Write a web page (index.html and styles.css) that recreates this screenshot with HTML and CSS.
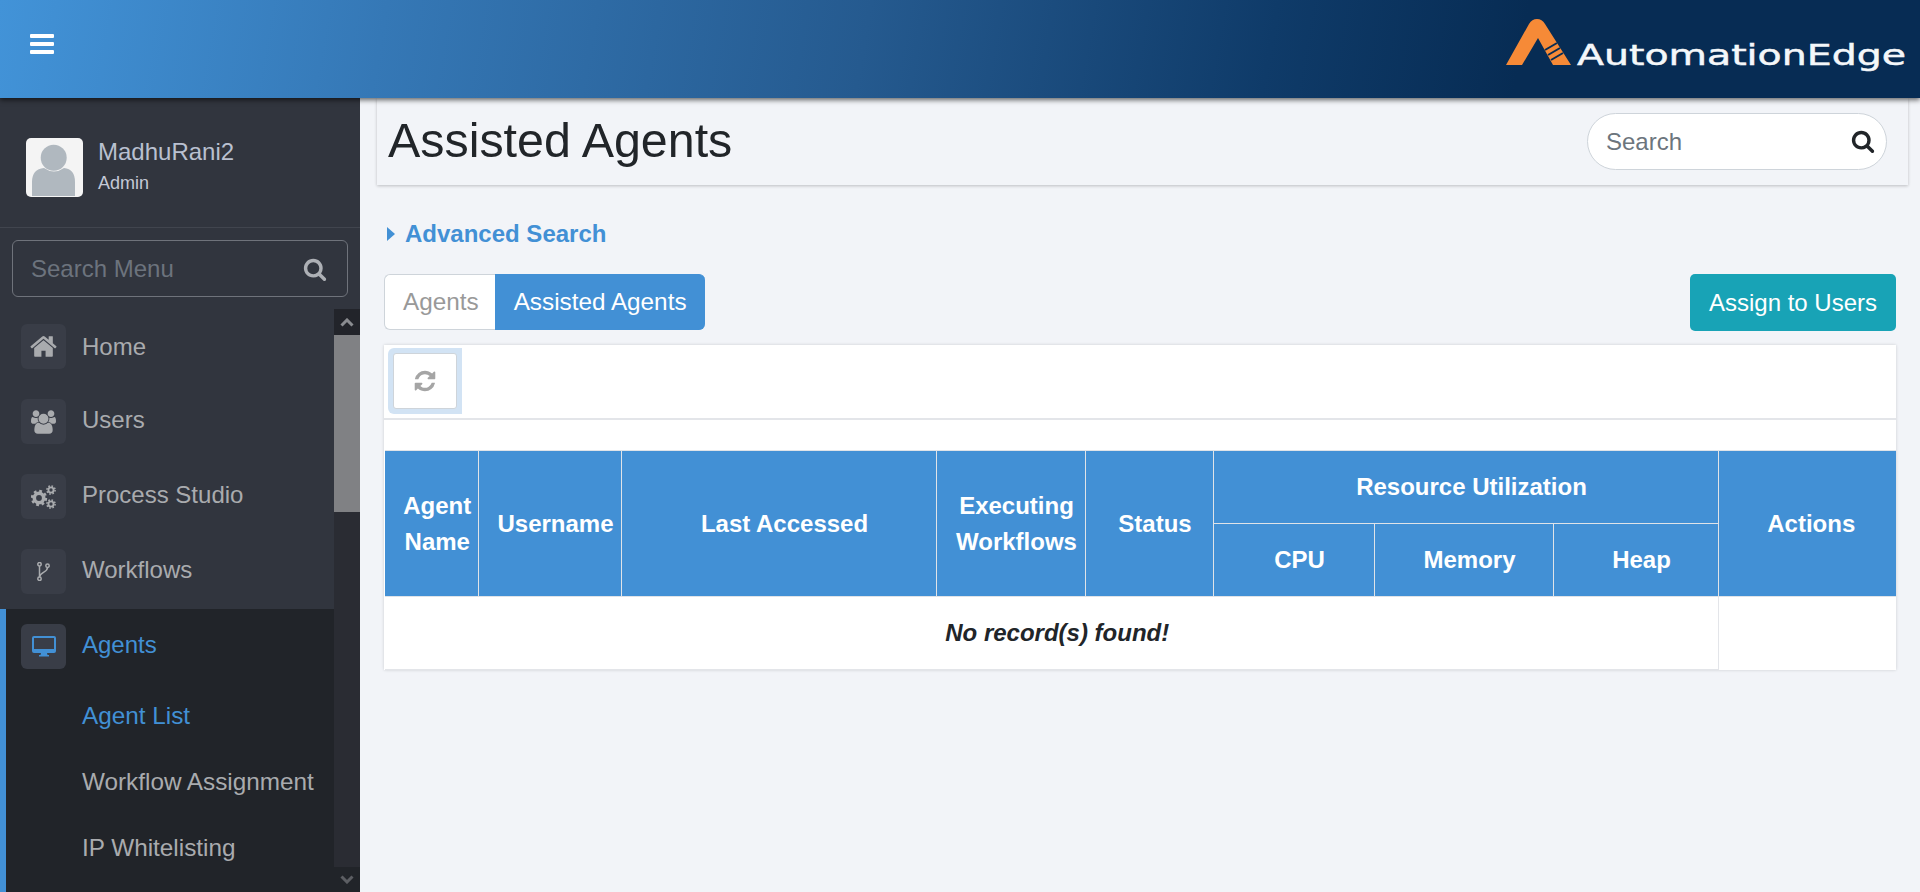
FILE: index.html
```html
<!DOCTYPE html>
<html lang="en">
<head>
<meta charset="utf-8">
<title>Assisted Agents</title>
<link rel="stylesheet" href="styles.css">
</head>
<body>
<header class="topbar">
  <button class="burger" type="button" aria-label="Menu">
    <span></span><span></span><span></span>
  </button>
  <div class="logo">
    <svg class="logo-mark" viewBox="0 0 66 46" width="66" height="46">
      <path class="mark-fill" d="M0 46 L23 5 Q26 0 31 0 Q36 0 39 5 L65 46 L47 46 L32 19 L16 46 Z"/>
      <path class="mark-cut" d="M39 31 L51 24 M42 36 L54 29 M45 41 L57 34"/>
    </svg>
    <div class="logo-word"><span class="logo-text">AutomationEdge</span></div>
  </div>
</header>
<div class="shell">
  <aside class="sidebar">
    <div class="profile">
      <div class="avatar">
        <svg viewBox="0 0 57 59" width="57" height="59">
          <circle class="avatar-fill" cx="27.700" cy="19.700" r="13"/>
          <path class="avatar-fill" d="M6 58 V44 Q6 31 18 30 Q28 37 38 30 Q49 31 49 44 V58 Z"/>
        </svg>
      </div>
      <div class="profile-text">
        <div class="profile-name">MadhuRani2</div>
        <div class="profile-role">Admin</div>
      </div>
    </div>
    <div class="menu-search">
      <span class="menu-search-text">Search Menu</span>
      <svg class="menu-search-icon" viewBox="0 0 1792 1792" width="24" height="24"><path d="M1216 832q0-185-131.500-316.500t-316.500-131.500-316.500 131.500-131.500 316.500 131.500 316.500 316.500 131.500 316.500-131.500 131.500-316.500zm512 832q0 52-38 90t-90 38q-54 0-90-38l-343-342q-179 124-399 124-143 0-273.500-55.500t-225-150-150-225-55.500-273.500 55.500-273.500 150-225 225-150 273.500-55.500 273.500 55.500 225 150 150 225 55.500 273.500q0 220-124 399l343 343q37 37 37 90z"/></svg>
    </div>
    <div class="menu-wrap">
      <nav class="menu">
        <a class="menu-item menu-item-first">
          <span class="menu-icon"><svg viewBox="0 0 1792 1792" width="29" height="29"><path d="M1472 992v480q0 26-19 45t-45 19h-384v-384h-256v384h-384q-26 0-45-19t-19-45v-480q0-1 .5-3t.5-3l575-474 575 474q1 2 1 6zm223-69l-62 74q-8 9-21 11h-3q-13 0-21-7l-692-577-692 577q-12 8-24 7-13-2-21-11l-62-74q-8-10-7-23.500t11-21.500l719-599q32-26 76-26t76 26l244 204v-195q0-14 9-23t23-9h192q14 0 23 9t9 23v408l219 182q10 8 11 21.500t-7 23.500z"/></svg></span>
          <span class="menu-label">Home</span>
        </a>
        <a class="menu-item">
          <span class="menu-icon"><svg viewBox="0 0 1920 1792" width="25" height="24"><path d="M593 896q-162 5-265 128h-134q-82 0-138-40.500t-56-118.500q0-353 124-353 6 0 43.500 21t97.500 42.500 119 21.500q67 0 133-23-5 37-5 66 0 139 81 256zm1071 637q0 120-73 189.500t-194 69.500h-874q-121 0-194-69.500t-73-189.500q0-53 3.500-103.500t14-109 26.500-108.500 43-97.500 62-81 85.500-53.500 111.500-20q10 0 43 21.500t73 48 107 48 135 21.500 135-21.500 107-48 73-48 43-21.500q61 0 111.500 20t85.500 53.500 62 81 43 97.500 26.500 108.500 14 109 3.500 103.500zm-1024-1277q0 106-75 181t-181 75-181-75-75-181 75-181 181-75 181 75 75 181zm704 384q0 159-112.500 271.500t-271.500 112.500-271.500-112.500-112.500-271.500 112.500-271.500 271.500-112.500 271.500 112.500 112.500 271.500zm576 225q0 78-56 118.500t-138 40.500h-134q-103-123-265-128 81-117 81-256 0-29-5-66 66 23 133 23 59 0 119-21.500t97.500-42.500 43.500-21q124 0 124 353zm-128-609q0 106-75 181t-181 75-181-75-75-181 75-181 181-75 181 75 75 181z"/></svg></span>
          <span class="menu-label">Users</span>
        </a>
        <a class="menu-item">
          <span class="menu-icon"><svg viewBox="0 0 25 24" width="25" height="24">
            <circle class="cog-big" cx="8" cy="13" r="4.700"/><circle class="cog-big-teeth" cx="8" cy="13" r="7"/>
            <circle class="cog-small" cx="20" cy="5" r="2.600"/><circle class="cog-small-teeth" cx="20" cy="5" r="4.100"/>
            <circle class="cog-small" cx="20" cy="19" r="2.600"/><circle class="cog-small-teeth" cx="20" cy="19" r="4.100"/>
          </svg></span>
          <span class="menu-label">Process Studio</span>
        </a>
        <a class="menu-item">
          <span class="menu-icon"><svg class="fork" viewBox="0 0 13 19" width="13" height="19">
            <circle cx="2.500" cy="2.200" r="1.700"/><circle cx="2.500" cy="16.800" r="1.700"/><circle cx="10.500" cy="3.700" r="1.700"/>
            <path d="M2.500 4 V15 M10.500 5.500 C10.500 10.500 3.500 9.500 2.500 15"/>
          </svg></span>
          <span class="menu-label">Workflows</span>
        </a>
        <div class="menu-active">
          <a class="menu-item is-current">
            <span class="menu-icon"><svg viewBox="0 0 24 21" width="24" height="21"><path fill-rule="evenodd" d="M2 0 H22 Q24 0 24 2 V15 Q24 17 22 17 H15 L15.500 19 H17 V20.500 H7 V19 H8.500 L9 17 H2 Q0 17 0 15 V2 Q0 0 2 0 Z M2 2 V13 H22 V2 Z"/></svg></span>
            <span class="menu-label">Agents</span>
          </a>
          <a class="sub-item is-current">Agent List</a>
          <a class="sub-item">Workflow Assignment</a>
          <a class="sub-item">IP Whitelisting</a>
        </div>
      </nav>
      <div class="scrollbar">
        <div class="scroll-btn"><svg viewBox="0 0 14 9" width="14" height="9"><path d="M1.500 7.500 L7 2 L12.500 7.500"/></svg></div>
        <div class="scroll-track"><div class="scroll-thumb"></div></div>
        <div class="scroll-btn scroll-btn-down"><svg viewBox="0 0 14 9" width="14" height="9"><path d="M1.500 1.500 L7 7 L12.500 1.500"/></svg></div>
      </div>
    </div>
  </aside>
  <main class="content">
    <div class="titlebar">
      <h1 class="title">Assisted Agents</h1>
      <div class="pill-search">
        <span class="pill-text">Search</span>
        <svg viewBox="0 0 1792 1792" width="24" height="24"><path d="M1216 832q0-185-131.500-316.500t-316.500-131.500-316.500 131.500-131.500 316.500 131.500 316.500 316.500 131.500 316.500-131.500 131.500-316.500zm512 832q0 52-38 90t-90 38q-54 0-90-38l-343-342q-179 124-399 124-143 0-273.500-55.500t-225-150-150-225-55.500-273.500 55.500-273.500 150-225 225-150 273.500-55.500 273.500 55.500 225 150 150 225 55.500 273.500q0 220-124 399l343 343q37 37 37 90z"/></svg>
      </div>
    </div>
    <div class="body">
      <div class="advanced"><span class="caret"></span><span>Advanced Search</span></div>
      <div class="actions-row">
        <div class="tabs">
          <span class="tab">Agents</span>
          <span class="tab tab-on">Assisted Agents</span>
        </div>
        <button class="assign" type="button">Assign to Users</button>
      </div>
      <section class="card">
        <div class="toolbar">
          <div class="refresh-ring">
            <button class="refresh" type="button" aria-label="Refresh">
              <svg viewBox="0 0 1792 1792" width="24" height="24"><path d="M1639 1056q0 5-1 7-64 268-268 434.500t-478 166.500q-146 0-282.500-55t-243.500-157l-129 129q-19 19-45 19t-45-19-19-45v-448q0-26 19-45t45-19h448q26 0 45 19t19 45-19 45l-137 137q71 66 161 102t187 36q134 0 250-65t186-179q11-17 53-117 8-23 30-23h192q13 0 22.500 9.500t9.500 22.500zm25-800v448q0 26-19 45t-45 19h-448q-26 0-45-19t-19-45 19-45l138-138q-148-137-349-137-134 0-250 65t-186 179q-11 17-53 117-8 23-30 23h-199q-13 0-22.500-9.500t-9.500-22.500v-7q65-268 270-434.500t480-166.500q146 0 284 55.500t245 156.500l130-129q19-19 45-19t45 19 19 45z"/></svg>
            </button>
          </div>
        </div>
        <div class="spacer"></div>
        <table class="grid">
          <colgroup>
            <col class="c1"><col class="c2"><col class="c3"><col class="c4"><col class="c5">
            <col class="c6"><col class="c7"><col class="c8"><col class="c9">
          </colgroup>
          <thead>
            <tr class="head-top">
              <th rowspan="2">Agent Name</th>
              <th rowspan="2">Username</th>
              <th rowspan="2">Last Accessed</th>
              <th rowspan="2">Executing Workflows</th>
              <th rowspan="2">Status</th>
              <th colspan="3">Resource Utilization</th>
              <th rowspan="2" class="th-actions">Actions</th>
            </tr>
            <tr class="head-sub">
              <th>CPU</th><th>Memory</th><th>Heap</th>
            </tr>
          </thead>
          <tbody>
            <tr>
              <td colspan="8" class="empty">No record(s) found!</td>
              <td class="blank"></td>
            </tr>
          </tbody>
        </table>
      </section>
    </div>
  </main>
</div>
</body>
</html>
```

FILE: styles.css
```css
* { box-sizing: border-box; }
html, body { height: 100%; }
body {
  margin: 0;
  height: 892px;
  overflow: hidden;
  display: flex;
  flex-direction: column;
  background: #f2f4f8;
  color: #212529;
  font-family: "Liberation Sans", Arial, sans-serif;
  font-size: 24px;
}
a { display: block; }

.topbar {
  position: relative;
  z-index: 2;
  flex: 0 0 98px;
  display: flex;
  align-items: flex-start;
  justify-content: space-between;
  background: linear-gradient(100deg, #4293d8 0%, #3578b6 20%, #255a8f 45%, #0f3b69 66%, #072c54 79%, #072c54 100%);
  box-shadow: 0 2px 5px rgba(0, 0, 0, .6);
}
.burger {
  display: flex;
  flex-direction: column;
  gap: 4px;
  margin: 34px 0 0 30px;
  padding: 0;
  border: 0;
  background: none;
}
.burger span { display: block; width: 24px; height: 4px; border-radius: 1px; background: #fff; }
.logo { display: flex; align-items: flex-start; margin: 19px 15px 0 0; }
.logo-word { width: 328px; margin: 21px 0 0 5px; line-height: 30px; white-space: nowrap; }
.logo-text {
  display: inline-block;
  transform: scaleX(1.360);
  transform-origin: left center;
  color: #f4f7fa;
  -webkit-text-stroke: .5px #f4f7fa;
  font-family: "DejaVu Sans", sans-serif;
  font-size: 29px;
}
.mark-fill { fill: #f68a37; }
.mark-cut { stroke: #072c54; stroke-width: 2; fill: none; }

.shell { flex: 1; display: flex; min-height: 0; }

.sidebar {
  flex: 0 0 360px;
  display: flex;
  flex-direction: column;
  background: #31353e;
}
.profile {
  flex: 0 0 130px;
  display: flex;
  align-items: flex-start;
  gap: 15px;
  padding: 40px 0 0 26px;
  border-bottom: 1px solid #41454e;
}
.avatar { width: 57px; height: 59px; border-radius: 5px; background: #f4f4f4; overflow: hidden; }
.avatar svg { display: block; }
.avatar-fill { fill: #b0b8bf; }
.profile-name { font-size: 24px; line-height: 32px; margin-top: -2px; color: #b9c0d0; }
.profile-role { font-size: 18px; line-height: 24px; margin-top: 3px; color: #c4c9d6; }

.menu-search {
  flex: 0 0 57px;
  display: flex;
  align-items: center;
  justify-content: space-between;
  margin: 12px 12px 12px;
  padding: 0 20px 0 18px;
  border: 1px solid #6f737b;
  border-radius: 6px;
}
.menu-search-text { color: #6c737d; }
.menu-search-icon { fill: #adb0b5; }

.menu-wrap { flex: 1; display: flex; min-height: 0; }
.menu { flex: 0 0 334px; display: flex; flex-direction: column; color: #a9abae; }
.menu-item {
  flex: 0 0 75px;
  height: 75px;
  display: flex;
  align-items: center;
  gap: 16px;
  padding-left: 21px;
}
.menu-label { padding-bottom: 3px; }
.menu-item-first .menu-label { padding-bottom: 0; }
.menu-icon {
  flex: 0 0 45px;
  height: 45px;
  display: flex;
  align-items: center;
  justify-content: center;
  border-radius: 6px;
  background: #393d47;
}
.menu-icon svg { fill: #a9abae; display: block; }
.cog-big { fill: none; stroke: #a9abae; stroke-width: 3.600; }
.cog-big-teeth { fill: none; stroke: #a9abae; stroke-width: 2.400; stroke-dasharray: 2.750 2.750; }
.cog-small { fill: none; stroke: #a9abae; stroke-width: 1.900; }
.cog-small-teeth { fill: none; stroke: #a9abae; stroke-width: 1.500; stroke-dasharray: 1.610 1.610; }
.menu-icon .fork { fill: none; stroke: #a9abae; stroke-width: 1.500; }

.menu-active {
  flex: 1;
  display: flex;
  flex-direction: column;
  border-left: 6px solid #4290d5;
  margin-right: 0;
  background: #212429;
}
.menu-active .menu-item { padding-left: 15px; }
.menu-item.is-current { color: #4290d5; }
.menu-item.is-current .menu-icon svg { fill: #4290d5; }
.sub-item { flex: 0 0 66px; height: 66px; line-height: 64px; padding-left: 76px; white-space: nowrap; font-size: 24.300px; }
.sub-item.is-current { color: #4290d5; }

.scrollbar { flex: 0 0 26px; display: flex; flex-direction: column; background: #2a2c33; }
.scroll-btn { flex: 0 0 26px; display: flex; align-items: center; justify-content: center; background: #22242a; }
.scroll-btn svg { fill: none; stroke: #8a8c90; stroke-width: 3; }
.scroll-btn-down { flex-basis: 25px; background: #212429; }
.scroll-btn-down svg { stroke: #5c5e63; }
.scroll-track { flex: 1; }
.scroll-thumb { height: 177px; background: #808184; }

.content { flex: 1; min-width: 0; display: flex; flex-direction: column; }
.titlebar {
  flex: 0 0 87px;
  display: flex;
  align-items: center;
  justify-content: space-between;
  margin: 0 12px 0 17px;
  padding: 0 21px 1px 11px;
  box-shadow: 0 1px 3px rgba(0, 0, 0, .22);
}
.title { margin: -2px 0 0; font-size: 48.400px; font-weight: 400; line-height: 58px; color: #212529; }
.pill-search {
  width: 300px;
  height: 57px;
  display: flex;
  align-items: center;
  justify-content: space-between;
  padding: 0 11px 0 18px;
  border: 1px solid #ced4da;
  border-radius: 29px;
  background: #fff;
}
.pill-text { color: #6c757d; padding-top: 1px; }
.pill-search svg { fill: #212529; }

.body { padding: 0 24px; }
.advanced {
  display: flex;
  align-items: center;
  gap: 10px;
  margin-top: 31px;
  padding-left: 3px;
  height: 36px;
  font-weight: 700;
  color: #4290d5;
}
.caret { width: 0; height: 0; border-left: 8px solid #4290d5; border-top: 7px solid transparent; border-bottom: 7px solid transparent; }
.actions-row { display: flex; align-items: flex-start; justify-content: space-between; margin-top: 22px; }
.tabs { display: flex; height: 56px; font-size: 24.300px; }
.tab {
  display: flex;
  align-items: center;
  padding: 0 16px 0 18px;
  background: #fff;
  color: #999;
  border: 1px solid #ced4da;
  border-right: 0;
  border-radius: 6px 0 0 6px;
}
.tab-on { padding: 0 18px 0 18px; background: #4290d5; border-color: #4290d5; color: #fff; border-radius: 0 6px 6px 0; }
.assign {
  width: 206px;
  height: 57px;
  padding: 0;
  border: 0;
  border-radius: 5px;
  background: #18a3b6;
  color: #fff;
  font: inherit;
}
.card { margin-top: 14px; background: #fff; box-shadow: 0 0 3px rgba(0, 0, 0, .16); }
.toolbar { height: 75px; padding: 3px 0 0 4px; border-bottom: 2px solid #e3e5e9; }
.refresh-ring { display: inline-block; padding: 5px; border-radius: 6px 0 0 6px; background: #d2e3f4; }
.refresh {
  display: flex;
  align-items: center;
  justify-content: center;
  width: 64px;
  height: 56px;
  padding: 0;
  border: 1px solid #ced4da;
  border-radius: 3px;
  background: #fff;
}
.refresh svg { fill: #a5a5a5; }
.spacer { height: 30px; }

.grid {
  width: 1511px;
  margin-left: 1px;
  table-layout: fixed;
  border-collapse: collapse;
  background: #fff;
}
.c1 { width: 93px; }
.c2 { width: 143px; }
.c3 { width: 315px; }
.c4 { width: 149px; }
.c5 { width: 128px; }
.c6 { width: 161px; }
.c7 { width: 179px; }
.c8 { width: 165px; }
.c9 { width: 178px; }
.grid th {
  padding: 0 6px 0 18px;
  background: #4290d5;
  color: #fff;
  font-weight: 700;
  line-height: 36px;
  text-align: center;
  border: 1px solid #dfe3e8;
}
.grid th.th-actions { padding: 0 8px 0 16px; }
.head-top { height: 73px; }
.head-sub { height: 73px; }
.grid th:first-child { border-left: 0; }
.grid thead tr:first-child th { border-top: 1px solid #dfe3e8; }
.grid th:last-child { border-right: 0; }
.grid td { height: 73px; border: 1px solid #e3e5e9; border-top: 0; }
.empty {
  padding: 0 6px 0 18px;
  text-align: center;
  font-weight: 700;
  font-style: italic;
  color: #212529;
  border-left: 0 !important;
}
.blank { border-right: 0 !important; border-bottom: 0 !important; }
```
